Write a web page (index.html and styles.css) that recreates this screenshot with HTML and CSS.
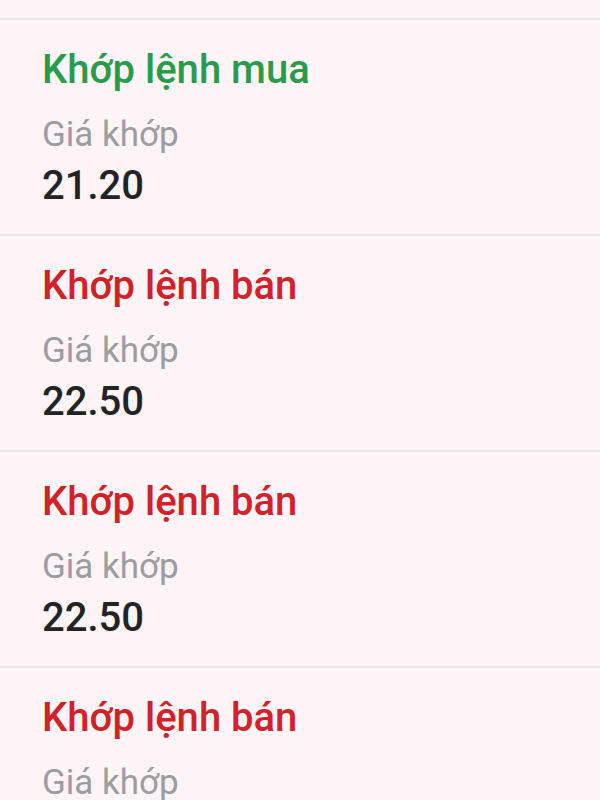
FILE: index.html
```html
<!DOCTYPE html>
<html lang="vi">

<head>
    <meta charset="UTF-8">
    <meta name="viewport" content="width=device-width, initial-scale=1.0">
    <title>Khớp lệnh</title>
    <link rel="stylesheet" href="styles.css">
</head>

<body>
    <div class="list">
        <div class="item">
            <div class="title buy">Khớp lệnh mua</div>
            <div class="label">Giá khớp</div>
            <div class="price">21.20</div>
        </div>
        <div class="item">
            <div class="title sell">Khớp lệnh bán</div>
            <div class="label">Giá khớp</div>
            <div class="price">22.50</div>
        </div>
        <div class="item">
            <div class="title sell">Khớp lệnh bán</div>
            <div class="label">Giá khớp</div>
            <div class="price">22.50</div>
        </div>
        <div class="item">
            <div class="title sell">Khớp lệnh bán</div>
            <div class="label">Giá khớp</div>
            <div class="price">22.50</div>
        </div>
    </div>
</body>

</html>
```

FILE: styles.css
```css
body {
    font-family: Roboto, "Noto Sans", sans-serif;
    background-color: #fdf4f7;
    margin: 0;
    height: 100vh;
    overflow: hidden;
}

.list {
    padding-top: 18px;
}

.item {
    border-top: 2px solid #ece5e8;
    height: 216px;
    padding: 27px 42px 0;
    box-sizing: border-box;
}

.title {
    font-size: 40px;
    line-height: 46px;
    font-weight: 500;
}

.buy {
    color: #2a9b4a;
}

.sell {
    color: #d22129;
}

.label {
    font-size: 35px;
    line-height: 42px;
    color: #9d9ca2;
    margin-top: 21px;
}

.price {
    font-size: 40px;
    line-height: 46px;
    font-weight: 500;
    color: #232323;
    margin-top: 7px;
}
```
